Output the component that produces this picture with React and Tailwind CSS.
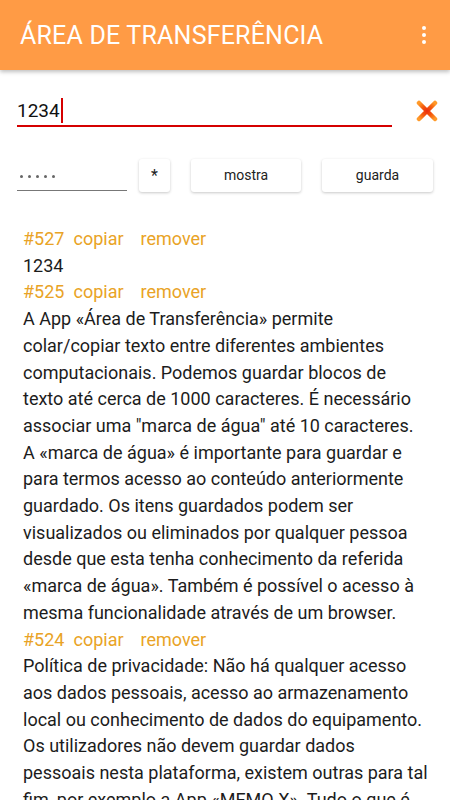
import { useState } from "react";

const items = [
  { id: 527, lines: ["1234"] },
  {
    id: 525,
    lines: [
      "A App «Área de Transferência» permite",
      "colar/copiar texto entre diferentes ambientes",
      "computacionais. Podemos guardar blocos de",
      "texto até cerca de 1000 caracteres. É necessário",
      'associar uma "marca de água" até 10 caracteres.',
      "A «marca de água» é importante para guardar e",
      "para termos acesso ao conteúdo anteriormente",
      "guardado. Os itens guardados podem ser",
      "visualizados ou eliminados por qualquer pessoa",
      "desde que esta tenha conhecimento da referida",
      "«marca de água». Também é possível o acesso à",
      "mesma funcionalidade através de um browser.",
    ],
  },
  {
    id: 524,
    lines: [
      "Política de privacidade: Não há qualquer acesso",
      "aos dados pessoais, acesso ao armazenamento",
      "local ou conhecimento de dados do equipamento.",
      "Os utilizadores não devem guardar dados",
      "pessoais nesta plataforma, existem outras para tal",
      "fim, por exemplo a App «MEMO X». Tudo o que é",
      "guardado nesta plataforma é público.",
    ],
  },
];

const CloseIcon = () => (
  <svg width="22" height="22" viewBox="0 0 22 22">
    <defs>
      <radialGradient id="xg" cx="11" cy="11" r="11" gradientUnits="userSpaceOnUse">
        <stop offset="0" stopColor="#ec2a0c" />
        <stop offset="0.55" stopColor="#f5600f" />
        <stop offset="1" stopColor="#ff9a2a" />
      </radialGradient>
    </defs>
    <path d="M3 3 L19 19 M19 3 L3 19" stroke="url(#xg)" strokeWidth="4.5" strokeLinecap="round" />
  </svg>
);

const Button = ({ children, className }) => (
  <button
    className={
      "h-[33px] bg-white rounded-[3px] text-[14px] text-[#222] shadow-[0_1px_3px_rgba(0,0,0,0.22)] " +
      className
    }
  >
    {children}
  </button>
);

export default function App() {
  const [text] = useState("1234");

  return (
    <div className="w-[450px] h-[800px] overflow-hidden bg-white font-['Roboto',sans-serif]">
      <header className="h-[70px] bg-[#ff9b45] flex items-center justify-between pl-[20px] pr-[24px] shadow-[0_2px_4px_rgba(0,0,0,0.25)] relative">
        <h1 className="text-white text-[25px] tracking-[0.2px] pt-[1px]">ÁREA DE TRANSFERÊNCIA</h1>
        <div className="flex flex-col gap-[3px]">
          <span className="w-[4px] h-[4px] rounded-full bg-white" />
          <span className="w-[4px] h-[4px] rounded-full bg-white" />
          <span className="w-[4px] h-[4px] rounded-full bg-white" />
        </div>
      </header>

      <div className="flex items-center pl-[17px] pr-[12px] mt-[26px]">
        <div className="w-[375px] h-[31px] border-b-2 border-[#d50000] flex items-center">
          <span className="text-[19px] text-[#111] leading-none">{text}</span>
          <span className="w-[2px] h-[25px] bg-[#d50000] ml-[1px]" />
        </div>
        <div className="ml-auto mt-[-2px]">
          <CloseIcon />
        </div>
      </div>

      <div className="flex items-center pl-[17px] mt-[32px]">
        <div className="w-[110px] h-[30px] border-b-[1.5px] border-[#777] flex items-center gap-[5px] pl-[3px] pt-[2px]">
          {[0, 1, 2, 3, 4].map((i) => (
            <span key={i} className="w-[3px] h-[3px] rounded-full bg-[#666]" />
          ))}
        </div>
        <Button className="w-[31px] ml-[12px] text-[16px]">*</Button>
        <Button className="w-[110px] ml-[21px]">mostra</Button>
        <Button className="w-[111px] ml-[21px]">guarda</Button>
      </div>

      <div className="pl-[23px] pt-[34px] text-[18px] leading-[26.7px] text-[#1c1c1c]">
        {items.map((item) => (
          <div key={item.id}>
            <div className="text-[#e9a326] whitespace-nowrap">
              <span>#{item.id}</span>
              <span className="ml-[9px]">copiar</span>
              <span className="ml-[17px]">remover</span>
            </div>
            {item.lines.map((line, i) => (
              <div key={i} className="whitespace-nowrap">
                {line}
              </div>
            ))}
          </div>
        ))}
      </div>
    </div>
  );
}
